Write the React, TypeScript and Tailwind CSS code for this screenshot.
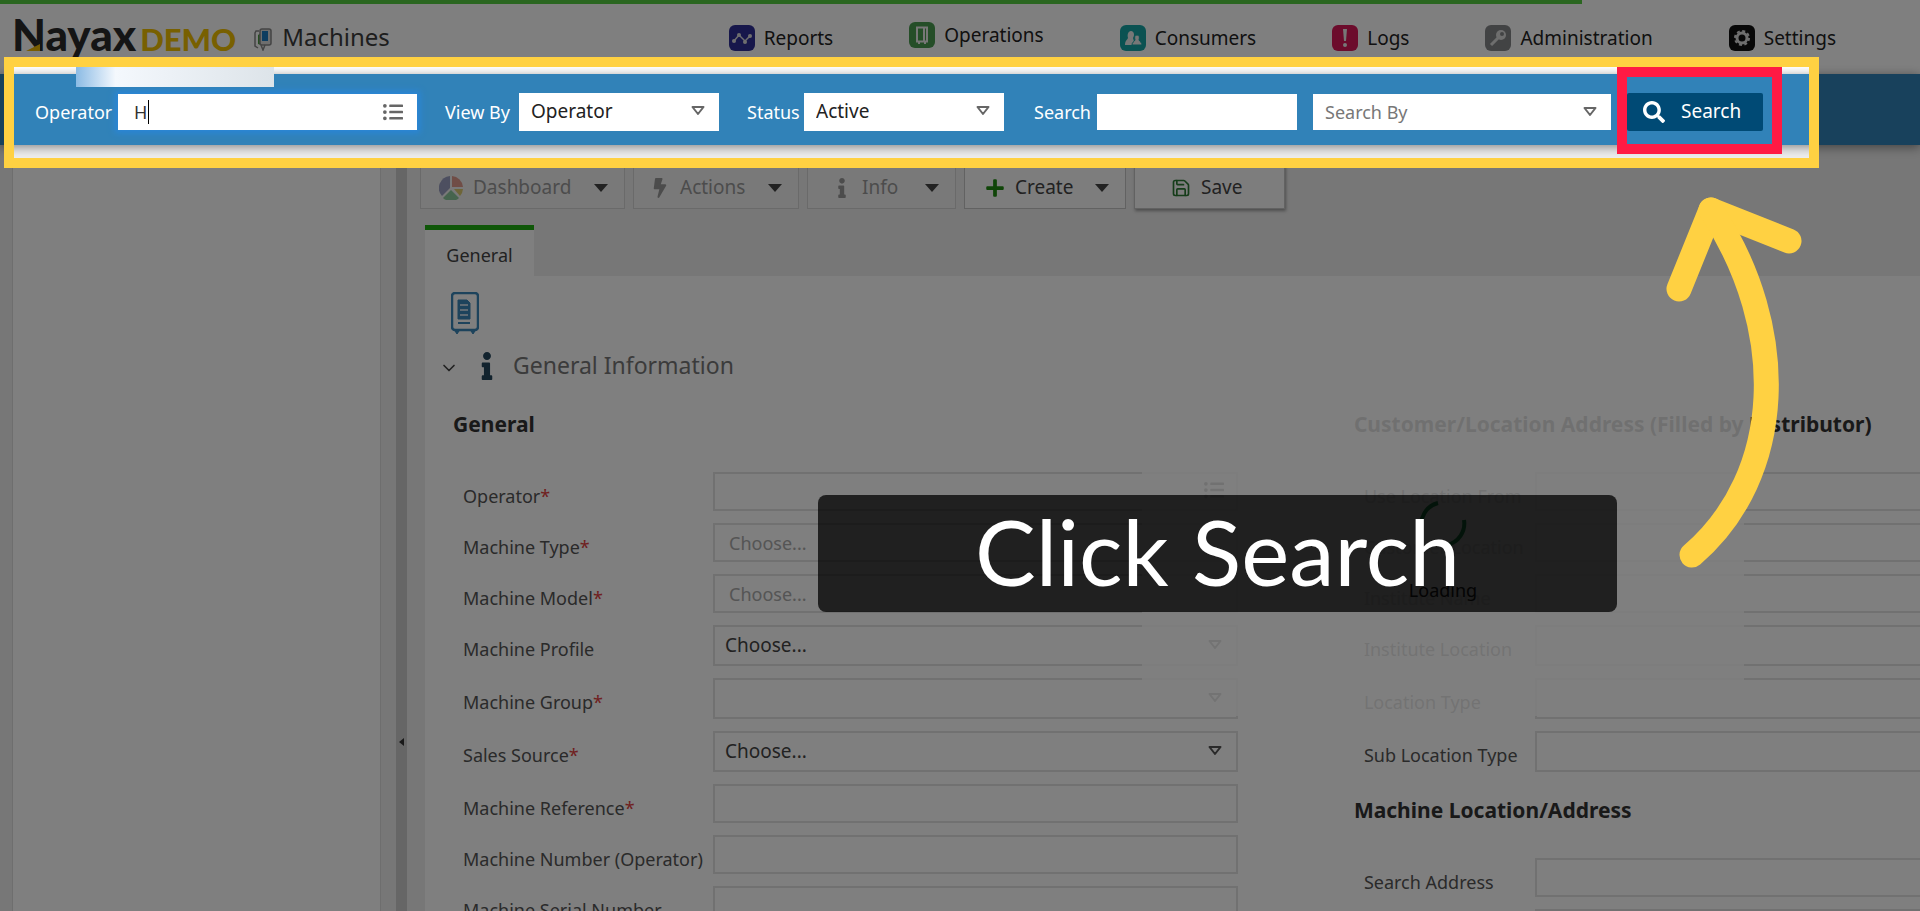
import React from "react";
import clsx from "clsx";
import { FaBolt, FaInfo, FaListUl, FaPlus, FaSearch } from "react-icons/fa";
import { ChevronDown, Save } from "lucide-react";

interface IFieldProps {
  id: string;
  label: string;
  required?: boolean;
  kind?: "text" | "list" | "select";
  placeholder?: string;
  disabled?: boolean;
}

const generalFields: IFieldProps[] = [
  { id: "operator", label: "Operator", required: true, kind: "list" },
  { id: "type", label: "Machine Type", required: true, placeholder: "Choose...", disabled: true },
  { id: "model", label: "Machine Model", required: true, placeholder: "Choose...", disabled: true },
  { id: "profile", label: "Machine Profile", kind: "select", placeholder: "Choose..." },
  { id: "group", label: "Machine Group", required: true, kind: "select" },
  { id: "source", label: "Sales Source", required: true, kind: "select", placeholder: "Choose..." },
  { id: "reference", label: "Machine Reference", required: true },
  { id: "number", label: "Machine Number (Operator)" },
  { id: "serial", label: "Machine Serial Number" },
];

const customerFields: IFieldProps[] = [
  { id: "use-location", label: "Use Location From" },
  { id: "customer-location", label: "Customer Location" },
  { id: "institute-name", label: "Institute Name" },
  { id: "institute-location", label: "Institute Location", kind: "select" },
  { id: "location-type", label: "Location Type", kind: "select" },
  { id: "sub-location-type", label: "Sub Location Type", kind: "select" },
];

const addressFields: IFieldProps[] = [
  { id: "search-address", label: "Search Address" },
  { id: "country", label: "Country" },
];

const navItems = [
  { label: "Reports", icon: <ReportsIcon /> },
  { label: "Operations", icon: <OperationsIcon />, raised: true },
  { label: "Consumers", icon: <ConsumersIcon /> },
  { label: "Logs", icon: <LogsIcon /> },
  { label: "Administration", icon: <AdministrationIcon /> },
  { label: "Settings", icon: <SettingsIcon /> },
];

export default function App() {
  return (
    <div className="relative flex h-screen flex-col overflow-hidden bg-[#eeeeee] font-['Noto_Sans','Open_Sans',sans-serif] text-lg text-[#333]">
      <div className="h-1 shrink-0 bg-white">
        <div className="h-1 w-[82.4%] bg-[#55cc40]" />
      </div>
      <Header />
      <SearchBar />
      <div className="flex min-h-0 grow">
        <aside className="ml-3 mt-4 w-[369px] shrink-0 border-x border-[#ddd] bg-white" />
        <div className="ml-[15px] mt-4 w-[11px] shrink-0 bg-[#cccccc] pt-[576px]">
          <svg viewBox="0 0 6 10" className="ml-0.5 h-2.5 w-1.5">
            <path d="M6 1v8L1 5z" fill="#333" />
          </svg>
        </div>
        <main className="min-w-0 grow">
          <Toolbar />
          <div className="ml-[18px] mt-4">
            <button className="block h-[51px] w-[109px] border-t-[5px] border-[#1fae10] bg-white pt-1 text-lg text-[#444]">
              General
            </button>
            <MachineForm />
          </div>
        </main>
      </div>
      <LoadingPanel />
      <Walkthrough />
    </div>
  );
}

function Header() {
  return (
    <header className="flex h-[70px] shrink-0 items-start justify-between bg-white pl-3 pr-[84px]">
      <div className="flex items-center">
        <Logo />
        <MachinesIcon />
        <h1 className="ml-2.5 text-2xl leading-[60px] text-[#3c3c3c]">Machines</h1>
      </div>
      <nav className="mt-5 flex gap-[76px]">
        {navItems.map((item) => (
          <a
            key={item.label}
            href="#"
            className={clsx("flex items-center gap-[9px] text-[19px] leading-7 text-[#222]", item.raised && "-mt-1.5")}
          >
            {item.icon}
            {item.label}
          </a>
        ))}
      </nav>
    </header>
  );
}

function SearchBar() {
  return (
    <form className="relative z-10 flex h-[71px] shrink-0 items-center bg-[#3182b8] pl-[35px] pt-1 text-white shadow-[0_2px_10px_rgba(0,0,0,0.45)]">
      <label htmlFor="bar-operator" className="w-[83px] shrink-0">
        Operator
      </label>
      <div className="relative w-[299px] shrink-0">
        <input
          id="bar-operator"
          defaultValue="H"
          className="block h-9 w-full bg-white pl-4 text-[#333] shadow-[0_0_6px_3px_#2a86d8] outline-none"
        />
        <span className="absolute left-[30px] top-1.5 h-6 w-px bg-black" />
        <FaListUl className="absolute right-3.5 top-2 size-5 text-[#666]" />
      </div>
      <label htmlFor="bar-view" className="ml-7 w-[74px] shrink-0">
        View By
      </label>
      <BarSelect id="bar-view" value="Operator" className="w-[200px]" />
      <label htmlFor="bar-status" className="ml-7 w-[57px] shrink-0">
        Status
      </label>
      <BarSelect id="bar-status" value="Active" className="w-[200px]" />
      <label htmlFor="bar-search" className="ml-[30px] w-[63px] shrink-0">
        Search
      </label>
      <input id="bar-search" className="h-9 w-[200px] shrink-0 bg-white outline-none" />
      <BarSelect id="bar-search-by" value="Search By" className="ml-4 w-[298px]" muted />
      <button
        type="button"
        className="ml-4 flex h-[38px] w-[136px] shrink-0 items-center gap-4 rounded-xs bg-[#004a75] pl-4 text-[19px]"
      >
        <FaSearch className="size-[22px]" />
        Search
      </button>
    </form>
  );
}

function BarSelect(props: { id: string; value: string; className: string; muted?: boolean }) {
  const { id, value, className, muted } = props;
  return (
    <div className={clsx("relative shrink-0", className)}>
      <select
        id={id}
        aria-label={value}
        className={clsx(
          "block w-full appearance-none bg-white pl-3 outline-none",
          muted ? "h-9 text-[#777]" : "h-[38px] text-[19px] text-[#222]"
        )}
      >
        <option>{value}</option>
      </select>
      <DropTriangle className="absolute right-3.5 top-3 text-[#666]" />
    </div>
  );
}

function Toolbar() {
  return (
    <div className="flex gap-2 pl-[13px] pt-5">
      <ToolButton label="Dashboard" icon={<PieIcon />} className="w-[205px] pl-[18px]" disabled caret />
      <ToolButton label="Actions" icon={<FaBolt className="size-5" />} className="w-[166px] pl-4" disabled caret />
      <ToolButton label="Info" icon={<FaInfo className="size-5" />} className="w-[149px] pl-6" disabled caret />
      <ToolButton
        label="Create"
        icon={<FaPlus className="size-5 text-[#1f8a10]" />}
        className="w-[162px] pl-5"
        caret
      />
      <ToolButton
        label="Save"
        icon={<Save className="size-5 text-[#2c7a34]" />}
        className="w-[151px] pl-9 shadow-[1px_2px_3px_rgba(0,0,0,0.35)]"
      />
    </div>
  );
}

interface IToolButtonProps {
  label: string;
  icon: React.ReactNode;
  className: string;
  disabled?: boolean;
  caret?: boolean;
}

function ToolButton(props: IToolButtonProps) {
  const { label, icon, className, disabled, caret } = props;
  return (
    <button
      disabled={disabled}
      className={clsx(
        "flex h-11 items-center gap-2.5 border pt-0.5 pr-4 text-[19px]",
        disabled ? "border-[#d4d4d4] bg-[#f2f2f2] text-[#999]" : "border-[#c4c4c4] bg-[#fafafa] text-[#444]",
        className
      )}
    >
      {icon}
      {label}
      {caret && (
        <svg viewBox="0 0 14 8" className="ml-auto h-2 w-3.5">
          <path d="M0 0h14L7 8z" fill="#444" />
        </svg>
      )}
    </button>
  );
}

function MachineForm() {
  return (
    <section className="bg-[#fefefe] pt-4">
      <CabinetIcon />
      <div className="mt-3 flex h-10 items-center pl-3.5">
        <ChevronDown className="mt-1 size-5 text-[#444]" />
        <FaInfo className="ml-3.5 size-7 text-[#24465c]" />
        <h2 className="ml-3 text-[23px] text-[#777]">General Information</h2>
      </div>
      <div className="mt-6 flex">
        <div className="w-[62%] shrink-0 pl-7 pr-[114px]">
          <h3 className="text-[21px] leading-7 font-bold">General</h3>
          <FieldList fields={generalFields} labelClass="w-[250px]" />
        </div>
        <div className="-mr-16 min-w-0 grow pl-0.5">
          <h3 className="whitespace-nowrap text-[21px] leading-7 font-bold">
            Customer/Location Address (Filled by Distributor)
          </h3>
          <FieldList fields={customerFields} labelClass="w-[171px]" />
          <h3 className="mt-6 text-[21px] leading-7 font-bold">Machine Location/Address</h3>
          <FieldList fields={addressFields} labelClass="w-[171px]" />
        </div>
      </div>
    </section>
  );
}

function FieldList(props: { fields: IFieldProps[]; labelClass: string }) {
  return (
    <div className="mt-[34px] flex flex-col gap-3 pl-2.5">
      {props.fields.map((field) => (
        <Field key={field.id} {...field} labelClass={props.labelClass} />
      ))}
    </div>
  );
}

function Field(props: IFieldProps & { labelClass: string }) {
  const { id, label, required, kind = "text", placeholder, disabled, labelClass } = props;
  return (
    <div className="flex">
      <label htmlFor={id} className={clsx("shrink-0 whitespace-nowrap pt-2.5 leading-7 text-[#555]", labelClass)}>
        {label}
        {required && <span className="text-[#e04040]">*</span>}
      </label>
      <div className="relative min-w-0 grow">
        {kind === "select" ? (
          <>
            <select
              id={id}
              className="block h-[41px] w-full appearance-none border-2 border-[#e2e2e2] bg-transparent pl-2.5 text-[19px] text-[#444]"
            >
              <option>{placeholder}</option>
            </select>
            <DropTriangle className="absolute right-4 top-3.5 text-[#555]" />
          </>
        ) : (
          <input
            id={id}
            placeholder={placeholder}
            disabled={disabled}
            className="block h-[39px] w-full border-2 border-[#e2e2e2] bg-transparent pl-3.5 placeholder:text-[#aaa]"
          />
        )}
        {kind === "list" && <FaListUl className="absolute right-3.5 top-2 size-5 text-[#444]" />}
      </div>
    </div>
  );
}

// white panel that fades the form while the machine is being fetched
function LoadingPanel() {
  return (
    <div className="absolute left-[1142px] top-[410px] flex h-[306px] w-[602px] flex-col items-center rounded-[10px] bg-white/85 pt-[90px]">
      <svg viewBox="0 0 48 48" className="size-12" fill="none" stroke="#1f9a50" strokeWidth="4">
        <path d="M19 3A22 22 0 0 0 3 30" />
        <path d="M45 20A22 22 0 0 1 28 45" />
      </svg>
      <p className="mt-7 text-[#222]">Loading</p>
    </div>
  );
}

// tutorial layer: spotlight over the search bar, caption and arrow
function Walkthrough() {
  return (
    <>
      <div className="absolute left-[76px] top-[67px] z-10 h-5 w-[198px] bg-linear-to-r from-[#8bbbe4] via-[#f4f8fd] via-20% to-[#dde4e9]" />
      <div className="absolute left-1 top-[57px] z-20 h-[111px] w-[1815px] border-10 border-[#ffd142] shadow-[0_0_0_3000px_rgba(0,0,0,0.5)]" />
      <div className="absolute left-[1617px] top-[67px] z-20 h-[87px] w-[165px] border-10 border-[#ff1a44]" />
      <div className="absolute left-[818px] top-[495px] z-20 h-[117px] w-[799px] rounded-lg bg-black/75 text-center font-['Lato',sans-serif] text-[91px] leading-[112px] text-white">
        Click Search
      </div>
      <svg
        viewBox="1660 190 150 385"
        className="absolute left-[1660px] top-[190px] z-20 h-[385px] w-[150px]"
        fill="none"
        stroke="#ffd142"
        strokeWidth="25"
        strokeLinecap="round"
        strokeLinejoin="round"
      >
        <path d="M1679 289L1711 210L1789 241" />
        <path d="M1711 210C1790 330 1785 475 1692 555" />
      </svg>
    </>
  );
}

function DropTriangle(props: { className: string }) {
  return (
    <svg viewBox="0 0 14 12" className={clsx("pointer-events-none h-3 w-3.5", props.className)}>
      <path d="M1.500 2h11L7 9z" fill="none" stroke="currentColor" strokeWidth="2" strokeLinejoin="round" />
    </svg>
  );
}

function Logo() {
  return (
    <div className="relative flex items-baseline font-['Lato',sans-serif] font-black leading-[60px]">
      <span className="text-[44px] text-[#2b2b2b]">Nayax</span>
      <span className="ml-1 text-[31px] text-[#f0c000]">DEMO</span>
      <svg viewBox="0 0 14 7" className="absolute left-3.5 top-10 h-[7px] w-3.5">
        <path d="M0 7L14 0V7z" fill="#f0b800" />
      </svg>
    </div>
  );
}

function MachinesIcon() {
  return (
    <svg viewBox="0 0 18 24" className="ml-[18px] mt-1 h-6 w-[18px]">
      <path d="M5 4H2L1 6v13l3 2" fill="none" stroke="#888" strokeWidth="1.500" />
      <path d="M4 8v9l3 1V6z" fill="#4a9a40" />
      <rect x="6" y="2" width="11" height="16" rx="2" fill="#ddd" stroke="#888" strokeWidth="1.500" />
      <rect x="8" y="4" width="6" height="10" fill="#1c7ac0" />
      <path d="M7 18l2 5 2-5" fill="none" stroke="#888" strokeWidth="1.500" />
    </svg>
  );
}

function NavIcon(props: { fill: string; children: React.ReactNode }) {
  return (
    <svg viewBox="0 0 26 26" className="h-[26px] w-[26px]" fill="none">
      <rect width="26" height="26" rx="6" fill={props.fill} />
      {props.children}
    </svg>
  );
}

function ReportsIcon() {
  return (
    <NavIcon fill="#2f2f96">
      <path d="M5 16l5-6 6 6 5-5" stroke="#ddd" strokeWidth="1.500" />
      <g fill="#ddd">
        <circle cx="5" cy="16" r="2" />
        <circle cx="10" cy="10" r="2" />
        <circle cx="16" cy="17" r="2" />
        <circle cx="21" cy="11" r="2" />
      </g>
    </NavIcon>
  );
}

function OperationsIcon() {
  return (
    <NavIcon fill="#4a9c50">
      <path d="M8 5.500h10v14H8zM10 20v2M16 20v2" stroke="#eee" strokeWidth="2" />
      <path d="M15 6v13" stroke="#eee" strokeWidth="2" />
    </NavIcon>
  );
}

function ConsumersIcon() {
  return (
    <NavIcon fill="#16a5a5">
      <path d="M5 20c0-4 2-5 3-7-1-3 0-7 3-7s4 4 2 7l2 7z" fill="#eee" />
      <path d="M12 20c0-3 2-3 3-5-1-3 0-5 2-5s3 2 2 5c1 2 3 2 3 5z" fill="#eee" stroke="#16a5a5" />
    </NavIcon>
  );
}

function LogsIcon() {
  return (
    <NavIcon fill="#d81858">
      <path d="M11 4h4l-1 12h-2z" fill="#eee" />
      <circle cx="13" cy="20" r="2" fill="#eee" />
    </NavIcon>
  );
}

function AdministrationIcon() {
  return (
    <NavIcon fill="#858789">
      <circle cx="16" cy="10" r="5" fill="#ddd" />
      <circle cx="17" cy="9" r="2" fill="#858789" />
      <path d="M13 13l-7 7" stroke="#ddd" strokeWidth="3" />
    </NavIcon>
  );
}

function SettingsIcon() {
  return (
    <NavIcon fill="#101010">
      <circle cx="13" cy="13" r="5" stroke="#ddd" strokeWidth="3" />
      <circle cx="13" cy="13" r="7" stroke="#ddd" strokeWidth="2" strokeDasharray="3 2.500" />
    </NavIcon>
  );
}

function PieIcon() {
  return (
    <svg viewBox="0 0 24 24" className="size-6">
      <path d="M11 0A12 12 0 0 0 3 20L11 12z" fill="#9a9fc0" />
      <path d="M13 0A12 12 0 0 1 24 11H13z" fill="#e09a8c" />
      <path d="M15 13h9a12 12 0 0 1-3 7z" fill="#dccb70" />
      <path d="M12 14l8 8a12 12 0 0 1-16 0z" fill="#8cc89c" />
    </svg>
  );
}

function CabinetIcon() {
  return (
    <svg viewBox="0 0 28 42" className="ml-[26px] h-[42px] w-7" fill="none" stroke="#3a86b8">
      <rect x="1" y="1" width="26" height="37" rx="3" strokeWidth="2.500" />
      <path d="M7 8h9l3 3v16H7z" fill="#3a86b8" />
      <path d="M9 13h8M9 18h8M9 23h8" stroke="#e8f0f6" strokeWidth="1.500" />
      <path d="M7 31h12" strokeWidth="2" />
      <path d="M4 39h4l-2 3zM20 39h4l-2 3z" fill="#3a86b8" />
    </svg>
  );
}
